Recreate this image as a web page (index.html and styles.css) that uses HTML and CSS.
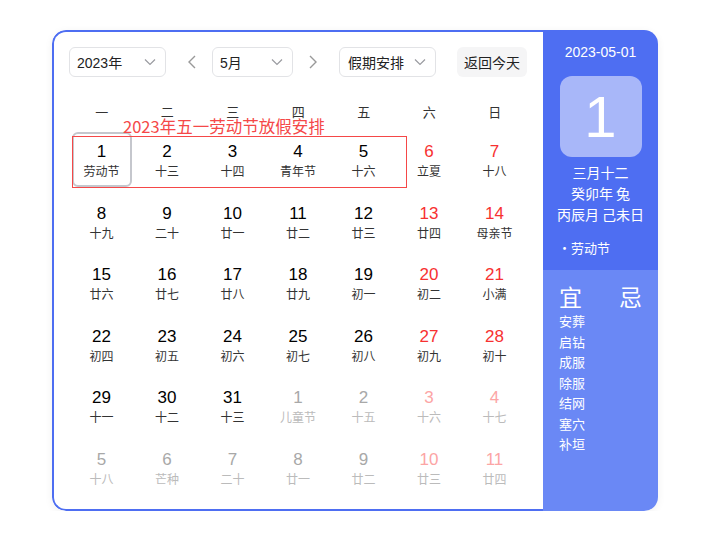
FILE: index.html
```html
<!DOCTYPE html>
<html lang="zh-CN">
<head>
<meta charset="utf-8">
<link rel="stylesheet" href="styles.css">
</head>
<body>
<div class="card">
  <div class="main">
    <div class="toolbar">
      <div class="select sel-year"><span>2023年</span><svg class="chev" viewBox="0 0 12 8"><polyline points="1,1.5 6,6.5 11,1.5"/></svg></div>
      <div class="arrow"><svg viewBox="0 0 8 14"><polyline points="7,1 1,7 7,13"/></svg></div>
      <div class="select sel-month"><span>5月</span><svg class="chev" viewBox="0 0 12 8"><polyline points="1,1.5 6,6.5 11,1.5"/></svg></div>
      <div class="arrow"><svg viewBox="0 0 8 14"><polyline points="1,1 7,7 1,13"/></svg></div>
      <div class="select sel-hol"><span>假期安排</span><svg class="chev" viewBox="0 0 12 8"><polyline points="1,1.5 6,6.5 11,1.5"/></svg></div>
      <div class="today-btn">返回今天</div>
    </div>
    <div class="weekdays">
      <span>一</span><span>二</span><span>三</span><span>四</span><span>五</span><span>六</span><span>日</span>
    </div>
    <div class="grid-wrap">
      <div class="holiday-box"><span class="holiday-label">2023年五一劳动节放假安排</span></div>
      <div class="grid">
        <div class="cell selected"><b>1</b><i>劳动节</i></div>
        <div class="cell"><b>2</b><i>十三</i></div>
        <div class="cell"><b>3</b><i>十四</i></div>
        <div class="cell"><b>4</b><i>青年节</i></div>
        <div class="cell"><b>5</b><i>十六</i></div>
        <div class="cell we"><b>6</b><i>立夏</i></div>
        <div class="cell we"><b>7</b><i>十八</i></div>

        <div class="cell"><b>8</b><i>十九</i></div>
        <div class="cell"><b>9</b><i>二十</i></div>
        <div class="cell"><b>10</b><i>廿一</i></div>
        <div class="cell"><b>11</b><i>廿二</i></div>
        <div class="cell"><b>12</b><i>廿三</i></div>
        <div class="cell we"><b>13</b><i>廿四</i></div>
        <div class="cell we"><b>14</b><i>母亲节</i></div>

        <div class="cell"><b>15</b><i>廿六</i></div>
        <div class="cell"><b>16</b><i>廿七</i></div>
        <div class="cell"><b>17</b><i>廿八</i></div>
        <div class="cell"><b>18</b><i>廿九</i></div>
        <div class="cell"><b>19</b><i>初一</i></div>
        <div class="cell we"><b>20</b><i>初二</i></div>
        <div class="cell we"><b>21</b><i>小满</i></div>

        <div class="cell"><b>22</b><i>初四</i></div>
        <div class="cell"><b>23</b><i>初五</i></div>
        <div class="cell"><b>24</b><i>初六</i></div>
        <div class="cell"><b>25</b><i>初七</i></div>
        <div class="cell"><b>26</b><i>初八</i></div>
        <div class="cell we"><b>27</b><i>初九</i></div>
        <div class="cell we"><b>28</b><i>初十</i></div>

        <div class="cell"><b>29</b><i>十一</i></div>
        <div class="cell"><b>30</b><i>十二</i></div>
        <div class="cell"><b>31</b><i>十三</i></div>
        <div class="cell other"><b>1</b><i>儿童节</i></div>
        <div class="cell other"><b>2</b><i>十五</i></div>
        <div class="cell other we"><b>3</b><i>十六</i></div>
        <div class="cell other we"><b>4</b><i>十七</i></div>

        <div class="cell other"><b>5</b><i>十八</i></div>
        <div class="cell other"><b>6</b><i>芒种</i></div>
        <div class="cell other"><b>7</b><i>二十</i></div>
        <div class="cell other"><b>8</b><i>廿一</i></div>
        <div class="cell other"><b>9</b><i>廿二</i></div>
        <div class="cell other we"><b>10</b><i>廿三</i></div>
        <div class="cell other we"><b>11</b><i>廿四</i></div>
      </div>
    </div>
  </div>
  <div class="side">
    <div class="side-top">
      <div class="side-date">2023-05-01</div>
      <div class="big-day">1</div>
      <div class="lunar-info">
        <div>三月十二</div>
        <div>癸卯年 兔</div>
        <div>丙辰月 己未日</div>
      </div>
      <div class="festival">·劳动节</div>
    </div>
    <div class="side-bottom">
      <div class="yiji">
        <div class="col">
          <div class="yj-title">宜</div>
          <div class="yj-item">安葬</div>
          <div class="yj-item">启钻</div>
          <div class="yj-item">成服</div>
          <div class="yj-item">除服</div>
          <div class="yj-item">结网</div>
          <div class="yj-item">塞穴</div>
          <div class="yj-item">补垣</div>
        </div>
        <div class="col">
          <div class="yj-title">忌</div>
        </div>
      </div>
    </div>
  </div>
</div>
</body>
</html>
```

FILE: styles.css
```css
* { box-sizing: border-box; }
html, body { margin: 0; padding: 0; background: #fff; }
body {
  font-family: "Liberation Sans", Arial, "Noto Sans CJK SC", sans-serif;
  color: #333;
}
.card {
  margin: 30px 0 0 52px;
  width: 606px;
  height: 481px;
  border-radius: 14px;
  display: flex;
  overflow: hidden;
  box-shadow: 0 2px 8px rgba(0,0,0,0.06);
}
.main {
  width: 491px;
  padding: 15px 0 0 15px;
  background: #fff;
  border: 2px solid #4e6ef2;
  border-right: none;
  border-radius: 14px 0 0 14px;
}
.toolbar {
  display: flex;
  align-items: center;
  height: 30px;
}
.select {
  height: 30px;
  border: 1px solid #e2e3e6;
  border-radius: 6px;
  display: flex;
  align-items: center;
  justify-content: space-between;
  padding: 0 9px 0 7px;
  font-size: 14px;
  color: #222;
}
.sel-year { width: 97px; }
.sel-month { width: 81px; }
.sel-hol { width: 97px; margin-left: 14px; padding-left: 8px; }
.chev { width: 12px; height: 8px; }
.chev polyline { fill: none; stroke: #9a9ba0; stroke-width: 1.2; }
.arrow {
  width: 24px;
  height: 30px;
  display: flex;
  align-items: center;
  justify-content: center;
  margin: 0 8px 0 14px;
}
.sel-month + .arrow { margin: 0 0 0 8px; }
.arrow svg { width: 8px; height: 14px; }
.arrow polyline { fill: none; stroke: #999; stroke-width: 1.4; }
.today-btn {
  margin-left: 21px;
  width: 70px;
  height: 30px;
  border-radius: 6px;
  background: #f5f5f6;
  font-size: 14px;
  color: #222;
  display: flex;
  align-items: center;
  justify-content: center;
}
.weekdays {
  margin-top: 19px;
  display: grid;
  grid-template-columns: repeat(7, 65.5px);
  height: 30px;
  align-items: center;
  font-size: 13px;
  color: #333;
  text-align: center;
  font-family: "Noto Sans CJK SC", sans-serif;
}
.grid-wrap { position: relative; margin-top: 6px; }
.grid {
  display: grid;
  grid-template-columns: repeat(7, 65.5px);
  grid-auto-rows: 55px;
  row-gap: 6.5px;
}
.cell {
  margin: 0 3px 0 2.5px;
  border: 2px solid transparent;
  border-radius: 6px;
  display: flex;
  flex-direction: column;
  align-items: center;
  padding-top: 8px;
}
.cell b {
  font-weight: normal;
  font-size: 17px;
  line-height: 20px;
  color: #000;
}
.cell i {
  font-style: normal;
  font-size: 12px;
  line-height: 18px;
  color: #333;
  font-family: "Noto Sans CJK SC", sans-serif;
}
.cell.we b { color: #f73131; }
.cell.other b { color: #a8a8a8; }
.cell.other i { color: #bbb; }
.cell.other.we b { color: #fca5a5; }
.cell.selected { border-color: #c5c7cd; }
.holiday-box {
  position: absolute;
  left: 3px;
  top: 4px;
  width: 335px;
  height: 52px;
  border: 1px solid #f54848;
  pointer-events: none;
}
.holiday-label {
  position: absolute;
  left: 50px;
  top: -21px;
  font-size: 16.5px;
  line-height: 20px;
  color: #f54848;
  white-space: nowrap;
  font-family: "Noto Sans CJK SC", sans-serif;
}
.side {
  width: 115px;
  display: flex;
  flex-direction: column;
  color: #fff;
  font-family: "Noto Sans CJK SC", sans-serif;
}
.side-top {
  background: #4e6ef2;
  height: 240px;
  padding-top: 12px;
  text-align: center;
}
.side-date {
  font-family: "Liberation Sans", Arial, sans-serif;
  font-size: 14px;
  line-height: 20px;
}
.big-day {
  margin: 14px auto 0;
  width: 82px;
  height: 81px;
  border-radius: 12px;
  background: #a8b7f9;
  font-family: "Liberation Sans", Arial, sans-serif;
  font-size: 58px;
  line-height: 81px;
  text-align: center;
}
.lunar-info {
  margin-top: 5px;
  font-size: 14px;
  line-height: 21px;
}
.festival {
  margin-top: 13px;
  text-align: left;
  padding-left: 15px;
  font-size: 13px;
  line-height: 20px;
}
.side-bottom {
  flex: 1;
  background: #6a88f5;
  padding: 12px 0 0 16px;
}
.yiji { display: flex; gap: 34px; }
.yj-title {
  font-size: 23px;
  line-height: 29px;
}
.yj-item {
  font-size: 13px;
  line-height: 20.5px;
}
```
